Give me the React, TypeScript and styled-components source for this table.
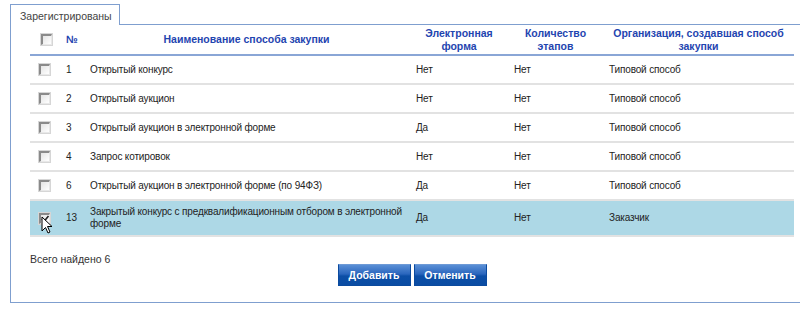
import React from "react";
import styled, { createGlobalStyle } from "styled-components";

const Global = createGlobalStyle`
  html, body { margin: 0; padding: 0; background: #fff; }
  body { font-family: "Liberation Sans", Arial, sans-serif; font-size: 10px; color: #222; }
`;

const Page = styled.div`
  padding: 4px 0 0 10px;
  width: 820px;
`;

const TabStrip = styled.div`
  display: flex;
  align-items: flex-end;
`;

const Tab = styled.div`
  width: 110px;
  height: 21px;
  box-sizing: border-box;
  border: 1px solid #7f9fcf;
  border-bottom: none;
  padding: 5px 0 0 9px;
  font-size: 10.5px;
  color: #444;
  background: #fff;
`;

const TabFiller = styled.div`
  flex: 1;
  border-bottom: 1px solid #7f9fcf;
`;

const Panel = styled.div`
  border-left: 1px solid #7f9fcf;
  border-bottom: 1px solid #7f9fcf;
  padding: 0 0 16px 19px;
  height: 278px;
  box-sizing: border-box;
`;

const Table = styled.table`
  width: 764px;
  border-collapse: collapse;
  table-layout: fixed;
`;

const Th = styled.th<{ $align?: string; $pad?: number }>`
  color: #1f45b0;
  font-weight: bold;
  font-size: 10.5px;
  line-height: 13px;
  text-align: ${(p) => p.$align || "center"};
  padding: 1px 4px 1px ${(p) => (p.$pad ?? 4)}px;
  height: 27px;
  vertical-align: middle;
  border-bottom: 2px solid #8aa6d6;
`;

const Row = styled.tr<{ $active?: boolean }>`
  background: ${(p) => (p.$active ? "#add8e6" : "transparent")};
`;

const Td = styled.td<{ $tall?: boolean; $pad?: number; $padR?: number }>`
  height: ${(p) => (p.$tall ? "34px" : "27px")};
  padding: 0 ${(p) => (p.$padR ?? 6)}px 0 ${(p) => (p.$pad ?? 6)}px;
  vertical-align: middle;
  border-bottom: 2px solid #e2e2e2;
  font-size: 10px;
  line-height: 12px;
  letter-spacing: -0.15px;
  color: #222;
`;

const CbCell = styled.div<{ $offset?: number }>`
  position: relative;
  width: 13px;
  height: 13px;
  margin-left: ${(p) => p.$offset ?? 2}px;
`;

const Checkbox = styled.div`
  width: 13px;
  height: 13px;
  box-sizing: border-box;
  border: 1px solid #d6d6d6;
  background: #fff;
  position: relative;
  &::before {
    content: "";
    position: absolute;
    inset: 0;
    border-top: 2px solid #8a8a8a;
    border-left: 2px solid #8a8a8a;
    border-right: 1px solid #e8e8e8;
    border-bottom: 1px solid #e8e8e8;
    background: linear-gradient(135deg, #e4e4e4, #fff);
  }
`;

const Cursor = styled.svg`
  position: absolute;
  left: 3px;
  top: 4px;
`;

const Check = styled.svg`
  position: absolute;
  left: 1px;
  top: 1px;
`;

const Footer = styled.div`
  padding: 16px 0 0 0;
  color: #333;
  font-size: 10.5px;
`;

const Buttons = styled.div`
  display: flex;
  justify-content: center;
  gap: 3px;
  width: 764px;
  margin-top: -1px;
`;

const Button = styled.button`
  width: 73px;
  height: 22px;
  border: 1px solid #0b4a9e;
  border-top-color: #6e9ad6;
  background: linear-gradient(#5a8fd6 0%, #2a66bd 45%, #0c4ea6 55%, #0a4ca3 100%);
  color: #fff;
  font-family: "Liberation Sans", Arial, sans-serif;
  font-weight: bold;
  font-size: 10.5px;
  padding: 0;
  cursor: pointer;
`;

const rows = [
  { n: "1", name: "Открытый конкурс", e: "Нет", c: "Нет", o: "Типовой способ" },
  { n: "2", name: "Открытый аукцион", e: "Нет", c: "Нет", o: "Типовой способ" },
  { n: "3", name: "Открытый аукцион в электронной форме", e: "Да", c: "Нет", o: "Типовой способ" },
  { n: "4", name: "Запрос котировок", e: "Нет", c: "Нет", o: "Типовой способ" },
  { n: "6", name: "Открытый аукцион в электронной форме (по 94ФЗ)", e: "Да", c: "Нет", o: "Типовой способ" },
  {
    n: "13",
    name: "Закрытый конкурс с предквалификационным отбором в электронной форме",
    e: "Да",
    c: "Нет",
    o: "Заказчик",
    active: true,
  },
];

export default function App() {
  return (
    <>
      <Global />
      <Page>
        <TabStrip>
          <Tab>Зарегистрированы</Tab>
          <TabFiller />
        </TabStrip>
        <Panel>
          <Table>
            <colgroup>
              <col style={{ width: 28 }} />
              <col style={{ width: 25 }} />
              <col style={{ width: 327 }} />
              <col style={{ width: 98 }} />
              <col style={{ width: 95 }} />
              <col style={{ width: 191 }} />
            </colgroup>
            <thead>
              <tr>
                <Th $align="left">
                  <CbCell $offset={6}>
                    <Checkbox />
                  </CbCell>
                </Th>
                <Th $align="left" $pad={8}>№</Th>
                <Th>Наименование способа закупки</Th>
                <Th>
                  Электронная
                  <br />
                  форма
                </Th>
                <Th>
                  Количество
                  <br />
                  этапов
                </Th>
                <Th>
                  Организация, создавшая способ
                  <br />
                  закупки
                </Th>
              </tr>
            </thead>
            <tbody>
              {rows.map((r) => (
                <Row key={r.n} $active={r.active}>
                  <Td $tall={r.active} $pad={4}>
                    <CbCell $offset={4}>
                      <Checkbox />
                      {r.active && (
                        <>
                          <Check width="12" height="12" viewBox="0 0 12 12">
                            <path d="M3 6 L5 8.5 L9.5 3" fill="none" stroke="#222" strokeWidth="1.6" />
                          </Check>
                          <Cursor width="12" height="19" viewBox="0 0 12 19">
                            <path
                              d="M1 1 L1 15 L4.5 11.5 L7 17 L9 16 L6.5 10.5 L11 10.5 Z"
                              fill="#fff"
                              stroke="#000"
                              strokeWidth="1"
                              strokeLinejoin="round"
                            />
                          </Cursor>
                        </>
                      )}
                    </CbCell>
                  </Td>
                  <Td $tall={r.active} $pad={8}>{r.n}</Td>
                  <Td $tall={r.active} $pad={7} $padR={0}>{r.name}</Td>
                  <Td $tall={r.active}>{r.e}</Td>
                  <Td $tall={r.active}>{r.c}</Td>
                  <Td $tall={r.active}>{r.o}</Td>
                </Row>
              ))}
            </tbody>
          </Table>
          <Footer>Всего найдено 6</Footer>
          <Buttons>
            <Button>Добавить</Button>
            <Button>Отменить</Button>
          </Buttons>
        </Panel>
      </Page>
    </>
  );
}
